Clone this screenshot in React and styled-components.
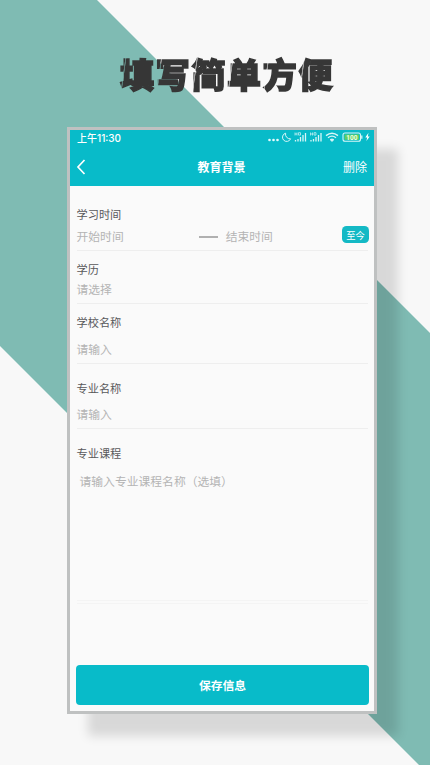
import React from 'react'
import styled, { createGlobalStyle } from 'styled-components'

const GlobalStyle = createGlobalStyle`
    * {
        box-sizing: border-box;
    }
    body {
        margin: 0;
        font-family: "Noto Sans CJK SC", sans-serif;
    }
`;

const Page = styled.div`
    position: relative;
    display: flex;
    flex-direction: column;
    align-items: flex-start;
    width: 430px;
    height: 765px;
    overflow: hidden;
    background-color: #f8f8f8;
    z-index: 0;
`;
//  斜向的绿色背景
const Band = styled.div`
    position: absolute;
    inset: 0;
    z-index: -1;
    background-color: #7fbbb3;
    clip-path: polygon(0 0, 97px 0, 430px 333px, 430px 765px, 419px 765px, 0 346px);
`;
//  标题文字带细斜切口
const Slogan = styled.h1`
    height: 127px;
    margin: 0 0 0 119px;
    padding: 49px 2px 0 1px;
    font-size: 34px;
    font-weight: 900;
    line-height: 50px;
    letter-spacing: 1.7px;
    white-space: nowrap;
    color: transparent;
    -webkit-text-stroke: 1.5px transparent;
    background-image: repeating-linear-gradient(
        98deg,
        #363636 0,
        #363636 14px,
        rgba(54, 54, 54, 0.45) 14.5px,
        rgba(54, 54, 54, 0.45) 15.2px,
        #363636 15.7px,
        #363636 35.35px
    );
    background-clip: text;
    -webkit-background-clip: text;
`;
const Phone = styled.main`
    display: flex;
    flex-direction: column;
    width: 310px;
    height: 587px;
    margin-left: 67px;
    border: 3px solid #bfc1c1;
    background-color: #fafafa;
    box-shadow: 21px 22px 10px rgba(0, 0, 0, 0.13);
`;
const Header = styled.header`
    height: 56px;
    background-color: #08bbc9;
    color: #fff;
`;
const StatusBar = styled.div`
    display: flex;
    align-items: center;
    justify-content: space-between;
    height: 14px;
    padding: 0 3px 0 7px;
`;
const Time = styled.span`
    padding-top: 1px;
    font-family: Inter, "Noto Sans CJK SC", sans-serif;
    font-size: 10px;
    font-weight: 500;
    line-height: 14px;
    white-space: nowrap;
`;
const NavBar = styled.div`
    display: grid;
    grid-template-columns: 60px 1fr 60px;
    align-items: center;
    height: 45px;
    padding: 0 7px 0 6px;
    font-size: 12px;
    line-height: 18px;
`;
const Back = styled.svg`
    width: 10px;
    height: 16px;
`;
const Title = styled.span`
    font-weight: 700;
    text-align: center;
`;
const Remove = styled.span`
    text-align: right;
`;
const Form = styled.div`
    flex: 1;
    padding: 0 6px 0 7px;
`;
const Field = styled.div`
    height: ${props => props.$height}px;
    padding-top: ${props => props.$top}px;
    border-bottom: 1px solid #eeeeee;
`;
const CourseField = styled(Field)`
    height: 175px;
    border-bottom: 4px double #f4f4f4;
`;
const Label = styled.div`
    height: 16px;
    margin-left: -0.5px;
    font-size: 11.2px;
    line-height: 16px;
    color: #58585a;
`;
const Value = styled.div`
    display: flex;
    align-items: center;
    height: 18px;
    margin-top: ${props => props.$gap}px;
    margin-left: -0.5px;
    padding-left: ${props => props.$indent || 0}px;
    font-size: 11.8px;
    line-height: 18px;
    color: #b4b4b4;
`;
const Dash = styled.i`
    width: 19px;
    height: 2px;
    margin: 1px 8px 0 75px;
    background-color: #b0b0b0;
`;
const Now = styled.span`
    width: 27px;
    height: 17px;
    margin: -3px -1px 0 auto;
    border-radius: 4.5px;
    background-color: #14b9c5;
    color: #fff;
    font-size: 9.3px;
    line-height: 18px;
    text-align: center;
`;
const Save = styled.button`
    height: 40px;
    margin: 0 5px 6px 6px;
    padding: 0 0 1px;
    border: 0;
    border-radius: 4px;
    background-color: #08bbc9;
    color: #fff;
    font-family: inherit;
    font-size: 11.8px;
    font-weight: 700;
`;

const StatusIcons = () => (
    <svg width="104" height="12" viewBox="0 0 104 12" fill="none" stroke="#d8f6f8">
        <g fill="#e8fbfc" stroke="none">
            <circle cx="2.5" cy="9" r="1.3" />
            <circle cx="6.5" cy="9" r="1.3" />
            <circle cx="10.5" cy="9" r="1.3" />
        </g>
        <path d="M18.6 2.2A4.2 4.2 0 1 0 23.6 7.8A4.6 4.6 0 0 1 18.6 2.2Z" strokeWidth="1" />
        {[27.5, 43].map(x => (
            <g key={x} transform={`translate(${x} 0)`}>
                <path d="M1 10.5V9M3.5 10.5V8M6 10.5V6M8.5 10.5V4M11 10.5V2" strokeWidth="1.3" />
                <path d="M.5 1.5V4.5M2.5 1.5V4.5M.5 3H2.5M4 1.7H6V4.1H4Z" strokeWidth=".7" />
            </g>
        ))}
        <g strokeWidth="1.4">
            <path d="M59 4.6Q65 -.2 71 4.6" />
            <path d="M61 6.8Q65 3.5 69 6.8" />
            <path d="M63 8.6Q65 7.2 67 8.6L65 10.5Z" fill="#e8fbfc" strokeWidth=".7" />
        </g>
        <rect x="76" y="2" width="17.5" height="8.2" rx="2" strokeWidth="1.1" />
        <rect x="77.6" y="3.5" width="14.4" height="5.2" fill="#62cf5d" stroke="none" />
        <path d="M94.8 4.5V7.7" strokeWidth="1.3" />
        <text x="84.8" y="8.5" fontSize="6.5" fontWeight="700" fontFamily="Roboto, sans-serif" textAnchor="middle" fill="#f2ffe9" stroke="none">100</text>
        <path d="M101.5 1.8L98.3 6.4H100.2L99.4 10L102.7 5.4H100.8Z" fill="#fff" stroke="none" />
    </svg>
)

const App = () => {
    return (
        <>
            <GlobalStyle />
            <Page>
                <Band />
                <Slogan>填写简单方便</Slogan>
                <Phone>
                    <Header>
                        <StatusBar>
                            <Time>上午11:30</Time>
                            <StatusIcons />
                        </StatusBar>
                        <NavBar>
                            <Back viewBox="0 0 10 16" fill="none" stroke="#fff" strokeWidth="1.7">
                                <path d="M8.5 1L2 8L8.5 15" />
                            </Back>
                            <Title>教育背景</Title>
                            <Remove>删除</Remove>
                        </NavBar>
                    </Header>
                    <Form>
                        <Field $height={65} $top={20}>
                            <Label>学习时间</Label>
                            <Value $gap={5}>
                                开始时间
                                <Dash />
                                结束时间
                                <Now>至今</Now>
                            </Value>
                        </Field>
                        <Field $height={53} $top={10}>
                            <Label>学历</Label>
                            <Value $gap={3}>请选择</Value>
                        </Field>
                        <Field $height={60} $top={10}>
                            <Label>学校名称</Label>
                            <Value $gap={10}>请输入</Value>
                        </Field>
                        <Field $height={65} $top={16}>
                            <Label>专业名称</Label>
                            <Value $gap={9}>请输入</Value>
                        </Field>
                        <CourseField $top={16}>
                            <Label>专业课程</Label>
                            <Value $gap={11} $indent={3}>请输入专业课程名称（选填）</Value>
                        </CourseField>
                    </Form>
                    <Save>保存信息</Save>
                </Phone>
            </Page>
        </>
    )
}
export default App
